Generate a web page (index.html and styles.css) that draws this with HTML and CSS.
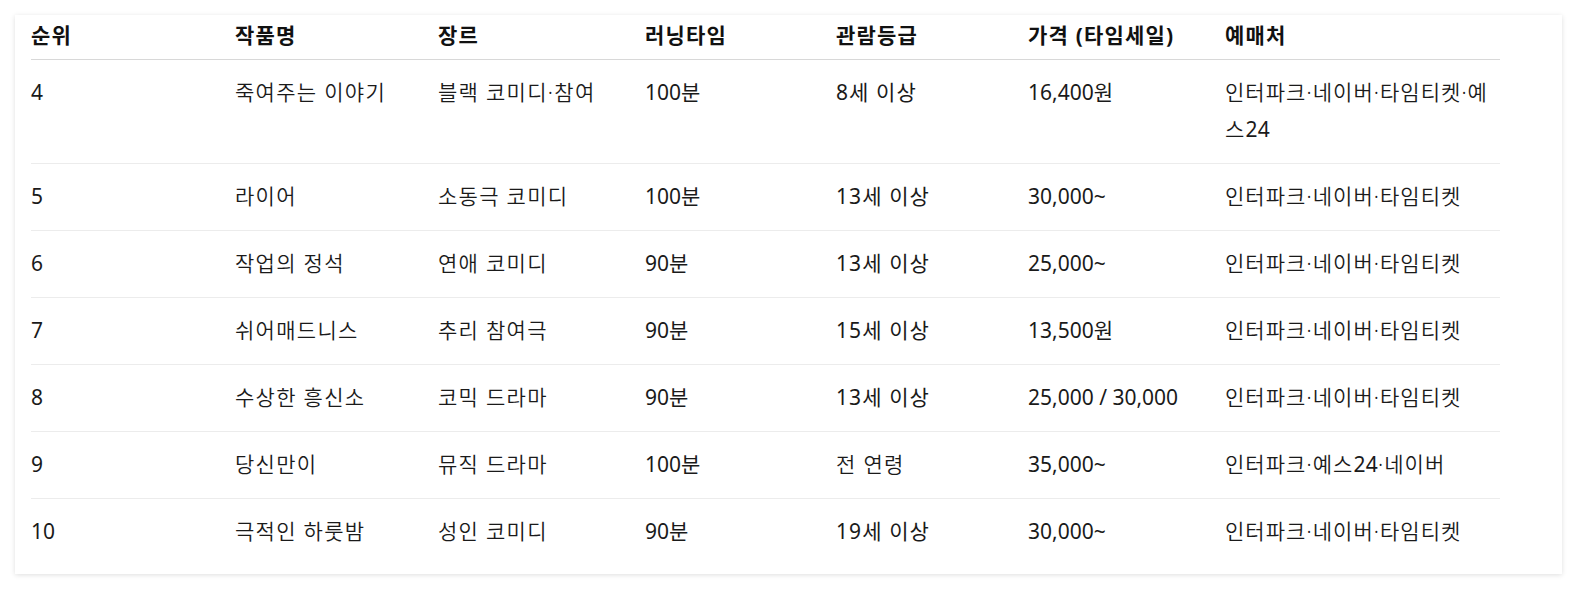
FILE: index.html
```html
<!DOCTYPE html>
<html lang="ko">
<head>
<meta charset="utf-8">
<title>공연 순위</title>
<link rel="stylesheet" href="styles.css">
</head>
<body>
<div class="card">
  <table class="rank-table">
    <colgroup>
      <col class="c-rank">
      <col class="c-title">
      <col class="c-genre">
      <col class="c-time">
      <col class="c-age">
      <col class="c-price">
      <col class="c-shop">
    </colgroup>
    <thead>
      <tr>
        <th>순위</th>
        <th>작품명</th>
        <th>장르</th>
        <th>러닝타임</th>
        <th>관람등급</th>
        <th>가격 (타임세일)</th>
        <th>예매처</th>
      </tr>
    </thead>
    <tbody>
      <tr>
        <td>4</td><td class="ko">죽여주는 이야기</td><td class="ko">블랙 코미디·참여</td><td>100분</td><td class="mix">8세 이상</td><td>16,400원</td><td class="ko shop">인터파크·네이버·타임티켓·예스<span class="num">24</span></td>
      </tr>
      <tr>
        <td>5</td><td class="ko">라이어</td><td class="ko">소동극 코미디</td><td>100분</td><td class="mix">13세 이상</td><td>30,000~</td><td class="ko shop">인터파크·네이버·타임티켓</td>
      </tr>
      <tr>
        <td>6</td><td class="ko">작업의 정석</td><td class="ko">연애 코미디</td><td>90분</td><td class="mix">13세 이상</td><td>25,000~</td><td class="ko shop">인터파크·네이버·타임티켓</td>
      </tr>
      <tr>
        <td>7</td><td class="ko">쉬어매드니스</td><td class="ko">추리 참여극</td><td>90분</td><td class="mix">15세 이상</td><td>13,500원</td><td class="ko shop">인터파크·네이버·타임티켓</td>
      </tr>
      <tr>
        <td>8</td><td class="ko">수상한 흥신소</td><td class="ko">코믹 드라마</td><td>90분</td><td class="mix">13세 이상</td><td>25,000 / 30,000</td><td class="ko shop">인터파크·네이버·타임티켓</td>
      </tr>
      <tr>
        <td>9</td><td class="ko">당신만이</td><td class="ko">뮤직 드라마</td><td>100분</td><td class="ko">전 연령</td><td>35,000~</td><td class="ko shop">인터파크·예스<span class="num">24</span>·네이버</td>
      </tr>
      <tr>
        <td>10</td><td class="ko">극적인 하룻밤</td><td class="ko">성인 코미디</td><td>90분</td><td class="mix">19세 이상</td><td>30,000~</td><td class="ko shop">인터파크·네이버·타임티켓</td>
      </tr>
    </tbody>
  </table>
</div>
</body>
</html>
```
FILE: styles.css
```css
html, body {
  margin: 0;
  background: #ffffff;
}
body {
  padding: 15px;
  font-family: "Noto Sans", "Noto Sans CJK KR", sans-serif;
  color: #1a1a1a;
}
.card {
  background: #ffffff;
  box-shadow: 0 1px 5px rgba(0, 0, 0, 0.13);
  padding: 0 16px 9px 16px;
}
.rank-table {
  table-layout: fixed;
  width: 1469px;
  border-collapse: collapse;
  font-size: 21px;
  line-height: 37px;
}
.c-rank { width: 204px; }
.c-title { width: 203px; }
.c-genre { width: 207px; }
.c-time { width: 191px; }
.c-age { width: 192px; }
.c-price { width: 197px; }
.c-shop { width: 275px; }
.rank-table th {
  text-align: left;
  font-weight: 700;
  color: #111111;
  letter-spacing: 1.2px;
  padding: 2px 0 5px 0;
  border-bottom: 1px solid #d8d8d8;
}
.rank-table td {
  vertical-align: top;
  font-weight: 400;
  padding: 14px 14px 15px 0;
  border-bottom: 1px solid #ececec;
}
.rank-table td.ko {
  font-weight: 350;
  letter-spacing: 1.3px;
}
.rank-table td.mix {
  letter-spacing: 1.1px;
}
.rank-table td.shop {
  letter-spacing: 1.05px;
  padding-right: 8px;
}
.rank-table .num {
  font-weight: 400;
  letter-spacing: 0.3px;
}
.rank-table tbody tr:last-child td {
  border-bottom: none;
}
```
